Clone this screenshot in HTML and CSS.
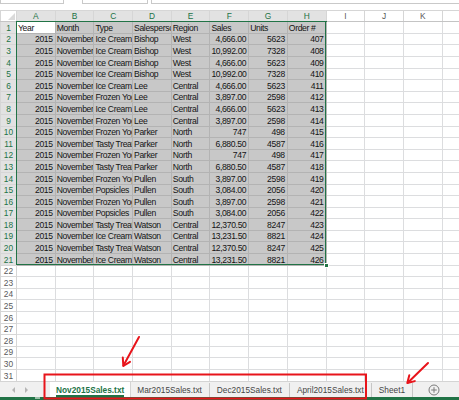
FILE: index.html
```html
<!DOCTYPE html>
<html lang="en">
<head>
    <meta charset="UTF-8">
    <title>Nov2015Sales.txt - Excel</title>
    <link rel="stylesheet" href="styles.css">
</head>
<body>
    <div class="formula-bar">
        <div class="box name-box"></div>
        <div class="box fx-box"></div>
        <div class="box input-box"></div>
    </div>

    <div class="sheet">
        <table class="grid">
            <colgroup>
                <col class="c-head">
                <col><col><col><col><col><col><col><col><col><col><col><col>
            </colgroup>
            <tr class="col-heads">
                <th class="corner"><span class="corner-tri"></span></th>
                <th class="on">A</th><th class="on">B</th><th class="on">C</th><th class="on">D</th>
                <th class="on">E</th><th class="on">F</th><th class="on">G</th><th class="on">H</th>
                <th>I</th><th>J</th><th>K</th><th>L</th>
            </tr>
            <tr class="sel"><th>1</th><td class="active">Year</td><td>Month</td><td>Type</td><td>Salesperson</td><td>Region</td><td>Sales</td><td>Units</td><td>Order #</td><td></td><td></td><td></td><td></td></tr>
            <tr class="sel"><th>2</th><td class="n">2015</td><td>November</td><td>Ice Cream</td><td>Bishop</td><td>West</td><td class="n">4,666.00</td><td class="n">5623</td><td class="n">407</td><td></td><td></td><td></td><td></td></tr>
            <tr class="sel"><th>3</th><td class="n">2015</td><td>November</td><td>Ice Cream</td><td>Bishop</td><td>West</td><td class="n">10,992.00</td><td class="n">7328</td><td class="n">408</td><td></td><td></td><td></td><td></td></tr>
            <tr class="sel"><th>4</th><td class="n">2015</td><td>November</td><td>Ice Cream</td><td>Bishop</td><td>West</td><td class="n">4,666.00</td><td class="n">5623</td><td class="n">409</td><td></td><td></td><td></td><td></td></tr>
            <tr class="sel"><th>5</th><td class="n">2015</td><td>November</td><td>Ice Cream</td><td>Bishop</td><td>West</td><td class="n">10,992.00</td><td class="n">7328</td><td class="n">410</td><td></td><td></td><td></td><td></td></tr>
            <tr class="sel"><th>6</th><td class="n">2015</td><td>November</td><td>Ice Cream</td><td>Lee</td><td>Central</td><td class="n">4,666.00</td><td class="n">5623</td><td class="n">411</td><td></td><td></td><td></td><td></td></tr>
            <tr class="sel"><th>7</th><td class="n">2015</td><td>November</td><td>Frozen Yogurt</td><td>Lee</td><td>Central</td><td class="n">3,897.00</td><td class="n">2598</td><td class="n">412</td><td></td><td></td><td></td><td></td></tr>
            <tr class="sel"><th>8</th><td class="n">2015</td><td>November</td><td>Ice Cream</td><td>Lee</td><td>Central</td><td class="n">4,666.00</td><td class="n">5623</td><td class="n">413</td><td></td><td></td><td></td><td></td></tr>
            <tr class="sel"><th>9</th><td class="n">2015</td><td>November</td><td>Frozen Yogurt</td><td>Lee</td><td>Central</td><td class="n">3,897.00</td><td class="n">2598</td><td class="n">414</td><td></td><td></td><td></td><td></td></tr>
            <tr class="sel"><th>10</th><td class="n">2015</td><td>November</td><td>Frozen Yogurt</td><td>Parker</td><td>North</td><td class="n">747</td><td class="n">498</td><td class="n">415</td><td></td><td></td><td></td><td></td></tr>
            <tr class="sel"><th>11</th><td class="n">2015</td><td>November</td><td>Tasty Treats</td><td>Parker</td><td>North</td><td class="n">6,880.50</td><td class="n">4587</td><td class="n">416</td><td></td><td></td><td></td><td></td></tr>
            <tr class="sel"><th>12</th><td class="n">2015</td><td>November</td><td>Frozen Yogurt</td><td>Parker</td><td>North</td><td class="n">747</td><td class="n">498</td><td class="n">417</td><td></td><td></td><td></td><td></td></tr>
            <tr class="sel"><th>13</th><td class="n">2015</td><td>November</td><td>Tasty Treats</td><td>Parker</td><td>North</td><td class="n">6,880.50</td><td class="n">4587</td><td class="n">418</td><td></td><td></td><td></td><td></td></tr>
            <tr class="sel"><th>14</th><td class="n">2015</td><td>November</td><td>Frozen Yogurt</td><td>Pullen</td><td>South</td><td class="n">3,897.00</td><td class="n">2598</td><td class="n">419</td><td></td><td></td><td></td><td></td></tr>
            <tr class="sel"><th>15</th><td class="n">2015</td><td>November</td><td>Popsicles</td><td>Pullen</td><td>South</td><td class="n">3,084.00</td><td class="n">2056</td><td class="n">420</td><td></td><td></td><td></td><td></td></tr>
            <tr class="sel"><th>16</th><td class="n">2015</td><td>November</td><td>Frozen Yogurt</td><td>Pullen</td><td>South</td><td class="n">3,897.00</td><td class="n">2598</td><td class="n">421</td><td></td><td></td><td></td><td></td></tr>
            <tr class="sel"><th>17</th><td class="n">2015</td><td>November</td><td>Popsicles</td><td>Pullen</td><td>South</td><td class="n">3,084.00</td><td class="n">2056</td><td class="n">422</td><td></td><td></td><td></td><td></td></tr>
            <tr class="sel"><th>18</th><td class="n">2015</td><td>November</td><td>Tasty Treats</td><td>Watson</td><td>Central</td><td class="n">12,370.50</td><td class="n">8247</td><td class="n">423</td><td></td><td></td><td></td><td></td></tr>
            <tr class="sel"><th>19</th><td class="n">2015</td><td>November</td><td>Ice Cream</td><td>Watson</td><td>Central</td><td class="n">13,231.50</td><td class="n">8821</td><td class="n">424</td><td></td><td></td><td></td><td></td></tr>
            <tr class="sel"><th>20</th><td class="n">2015</td><td>November</td><td>Tasty Treats</td><td>Watson</td><td>Central</td><td class="n">12,370.50</td><td class="n">8247</td><td class="n">425</td><td></td><td></td><td></td><td></td></tr>
            <tr class="sel"><th>21</th><td class="n">2015</td><td>November</td><td>Ice Cream</td><td>Watson</td><td>Central</td><td class="n">13,231.50</td><td class="n">8821</td><td class="n">426</td><td></td><td></td><td></td><td></td></tr>
            <tr><th>22</th><td></td><td></td><td></td><td></td><td></td><td></td><td></td><td></td><td></td><td></td><td></td><td></td></tr>
            <tr><th>23</th><td></td><td></td><td></td><td></td><td></td><td></td><td></td><td></td><td></td><td></td><td></td><td></td></tr>
            <tr><th>24</th><td></td><td></td><td></td><td></td><td></td><td></td><td></td><td></td><td></td><td></td><td></td><td></td></tr>
            <tr><th>25</th><td></td><td></td><td></td><td></td><td></td><td></td><td></td><td></td><td></td><td></td><td></td><td></td></tr>
            <tr><th>26</th><td></td><td></td><td></td><td></td><td></td><td></td><td></td><td></td><td></td><td></td><td></td><td></td></tr>
            <tr><th>27</th><td></td><td></td><td></td><td></td><td></td><td></td><td></td><td></td><td></td><td></td><td></td><td></td></tr>
            <tr><th>28</th><td></td><td></td><td></td><td></td><td></td><td></td><td></td><td></td><td></td><td></td><td></td><td></td></tr>
            <tr><th>29</th><td></td><td></td><td></td><td></td><td></td><td></td><td></td><td></td><td></td><td></td><td></td><td></td></tr>
            <tr><th>30</th><td></td><td></td><td></td><td></td><td></td><td></td><td></td><td></td><td></td><td></td><td></td><td></td></tr>
            <tr><th>31</th><td></td><td></td><td></td><td></td><td></td><td></td><td></td><td></td><td></td><td></td><td></td><td></td></tr>
        </table>
        <div class="selection"><span class="fill-handle"></span></div>
    </div>

    <div class="tabbar">
        <div class="nav">
            <span class="tri tri-left"></span>
            <span class="tri tri-right"></span>
        </div>
        <div class="tab active"><span>Nov2015Sales.txt</span></div>
        <div class="tab">Mar2015Sales.txt</div>
        <div class="tab">Dec2015Sales.txt</div>
        <div class="tab">April2015Sales.txt</div>
        <div class="tab">Sheet1</div>
        <div class="add">
            <svg width="12" height="12" viewBox="0 0 12 12">
                <circle cx="6" cy="6" r="5" fill="none" stroke="#7b7b7b" stroke-width="1"/>
                <path d="M6 3.2v5.6M3.2 6h5.6" stroke="#7b7b7b" stroke-width="1"/>
            </svg>
        </div>
    </div>
    <div class="status"><span class="status-mark"></span></div>

    <!-- red callouts drawn on top of the screenshot -->
    <svg class="callouts" width="459" height="400" viewBox="0 0 459 400">
        <rect x="44.5" y="374.5" width="321.5" height="24" fill="none" stroke="#e8141b" stroke-width="2"/>
        <g stroke="#e8141b" stroke-width="2" fill="none" stroke-linecap="round" stroke-linejoin="round">
            <path d="M139 337L123.5 365.5"/>
            <path d="M122.8 357.5L123.3 366L130 361.8"/>
            <path d="M428 363L408 382.5"/>
            <path d="M409.3 375.3L407.3 383L414.8 381.1"/>
        </g>
    </svg>
</body>
</html>
```

FILE: styles.css
```css
* {
    box-sizing: border-box;
}
body {
    margin: 0;
    width: 459px;
    height: 400px;
    overflow: hidden;
    position: relative;
    background-color: #fff;
    font-family: "Liberation Sans", Arial, sans-serif;
    color: #141414;
}

/* formula bar (only the bottom edge is visible) */
.formula-bar {
    display: flex;
    height: 10px;
    align-items: flex-start;
}
.box {
    height: 4px;
    border: 1px solid #c9c9c9;
    border-top: none;
    background-color: #fff;
}
.name-box {
    width: 64px;
}
.fx-box {
    width: 66px;
    margin-left: 18px;
}
.input-box {
    flex: 1;
    margin-left: 3px;
    border-right: none;
}

/* worksheet grid */
.sheet {
    position: relative;
    height: 371px;
    overflow: hidden;
}
.grid {
    table-layout: fixed;
    border-collapse: collapse;
    width: 480.4px;
    font-size: 8.6px;
    letter-spacing: -0.35px;
}
.grid col {
    width: 38.7px;
}
.grid col.c-head {
    width: 16px;
}
.grid tr {
    height: 11.6px;
}
.grid tr.col-heads {
    height: 11.2px;
}
.grid th,
.grid td {
    padding: 0 1px;
    line-height: 10px;
    white-space: nowrap;
    overflow: hidden;
    text-overflow: clip;
    vertical-align: bottom;
    border: 1px solid #dcdddf;
}
.grid td {
    text-align: left;
}
.grid td.n {
    text-align: right;
    padding-right: 2px;
}
.grid th {
    font-weight: normal;
    text-align: center;
    color: #5a5a5a;
    background-color: #fff;
    font-size: 8.4px;
    letter-spacing: 0;
    border-color: #d6d6d6;
}
.col-heads th {
    vertical-align: middle;
    border-bottom-color: #c4c4c4;
}
.col-heads th.on {
    background-color: #e2e2e2;
    color: #217346;
    border-bottom: 1px solid #217346;
}
.grid th.corner {
    position: relative;
}
.corner-tri {
    position: absolute;
    right: 1px;
    bottom: 1px;
    border-left: 7px solid transparent;
    border-bottom: 7px solid #dadada;
}
.grid tr.sel th {
    background-color: #e2e2e2;
    color: #217346;
    border-right: 1px solid #217346;
}
.grid tr.sel td:nth-child(-n+9) {
    background-color: #c8c8c8;
    border-color: #b3b3b3;
}
.grid tr.sel td.active {
    background-color: #fff;
}

.selection {
    position: absolute;
    left: 15.5px;
    top: 10.7px;
    width: 310.6px;
    height: 244.6px;
    border: 1.5px solid #217346;
    pointer-events: none;
}
.fill-handle {
    position: absolute;
    right: -3.5px;
    bottom: -3.5px;
    width: 5px;
    height: 5px;
    background-color: #217346;
    border: 1px solid #fff;
}

/* sheet tabs */
.tabbar {
    display: flex;
    align-items: stretch;
    height: 16px;
    background-color: #f0f0f0;
    border-top: 1px solid #d4d4d4;
    font-size: 8.3px;
    color: #444;
}
.nav {
    width: 50px;
    display: flex;
    align-items: center;
    gap: 10px;
    padding-left: 12px;
}
.tri {
    width: 0;
    height: 0;
    border-top: 3px solid transparent;
    border-bottom: 3px solid transparent;
}
.tri-left {
    border-right: 3px solid #b5b5b5;
}
.tri-right {
    border-left: 3px solid #b5b5b5;
}
.tab {
    display: flex;
    align-items: center;
    padding: 0 7px;
    border-right: 1px solid #c6c6c6;
    margin: 1px 0 0;
}
.tab.active {
    background-color: #fff;
    color: #217346;
    font-weight: bold;
    margin-top: 0;
    padding: 0 6px;
    border-right: none;
    box-shadow: 1px 0 0 #d4d4d4;
}
.tab.active span {
    padding-top: 2px;
    border-bottom: 2px solid #217346;
}
.add {
    display: flex;
    align-items: center;
    margin-left: 15px;
}
.status {
    height: 3px;
    background-color: #217346;
    position: relative;
}
.status-mark {
    position: absolute;
    left: 35px;
    top: 0;
    width: 5px;
    height: 2px;
    background-color: #9bbfa8;
}

.callouts {
    position: absolute;
    left: 0;
    top: 0;
    pointer-events: none;
}
```
